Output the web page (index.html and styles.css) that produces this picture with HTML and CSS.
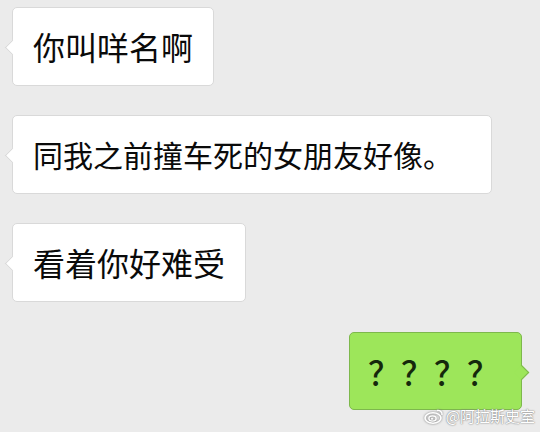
FILE: index.html
```html
<!DOCTYPE html>
<html lang="zh">
<head>
  <meta charset="UTF-8">
  <meta name="viewport" content="width=device-width, initial-scale=1.0">
  <title>聊天</title>
  <link rel="stylesheet" href="styles.css">
</head>
<body>
  <div class="chat">
    <div class="row left">
      <div class="bubble">你叫咩名啊</div>
    </div>
    <div class="row left">
      <div class="bubble bubble-long">同我之前撞车死的女朋友好像。</div>
    </div>
    <div class="row left">
      <div class="bubble">看着你好难受</div>
    </div>
    <div class="row right">
      <div class="bubble mine">？？？？</div>
    </div>
  </div>

  <div class="watermark">
    <svg class="weibo" width="20" height="16" viewBox="0 0 20 16">
      <ellipse cx="9" cy="10" rx="8" ry="5.2" fill="none" stroke="#fff" stroke-width="1.6"/>
      <ellipse cx="8.5" cy="10.5" rx="3.6" ry="2.6" fill="none" stroke="#fff" stroke-width="1.4"/>
      <circle cx="8" cy="10.8" r="1" fill="#fff"/>
      <path d="M13 2.5 a4 4 0 0 1 5 4.5" fill="none" stroke="#fff" stroke-width="1.4"/>
    </svg>
    <span>@阿拉斯史室</span>
  </div>
</body>
</html>
```

FILE: styles.css
```css
body {
  margin: 0;
  background-color: #ebebeb;
  font-family: "Noto Sans CJK SC", "Noto Sans", sans-serif;
  height: 432px;
  overflow: hidden;
  position: relative;
}
.chat {
  display: flex;
  flex-direction: column;
  gap: 29px;
  padding: 7px 18px 0 12px;
}
.row {
  display: flex;
}
.row.right {
  justify-content: flex-end;
  margin-top: 1px;
}
.bubble {
  position: relative;
  box-sizing: border-box;
  height: 79px;
  padding: 0 20px;
  line-height: 77px;
  font-size: 32px;
  color: #0a0a0a;
  background-color: #fff;
  border: 1px solid #d9d9d9;
  border-radius: 5px;
  white-space: nowrap;
}
.bubble-long {
  font-size: 30px;
  padding-right: 38px;
}
.bubble::before {
  content: "";
  position: absolute;
  top: 34px;
  left: -6px;
  width: 10px;
  height: 10px;
  background-color: #fff;
  border-left: 1px solid #d9d9d9;
  border-bottom: 1px solid #d9d9d9;
  transform: rotate(45deg);
}
.mine {
  width: 173px;
  height: 78px;
  padding: 0 14px 0 18px;
  font-weight: 500;
  letter-spacing: 1px;
  color: #15280c;
  background-color: #9de65a;
  border-color: #7db84c;
}
.mine::before {
  left: auto;
  right: -6px;
  background-color: #9de65a;
  border-left: none;
  border-bottom: none;
  border-right: 1px solid #7db84c;
  border-top: 1px solid #7db84c;
}
.watermark {
  position: absolute;
  right: 5px;
  bottom: 6px;
  display: flex;
  align-items: center;
  gap: 2px;
  font-size: 15px;
  color: #fff;
  text-shadow: 0 0 2px #888, 0 0 1px #777;
}
.weibo {
  filter: drop-shadow(0 0 1px #777);
}
```
